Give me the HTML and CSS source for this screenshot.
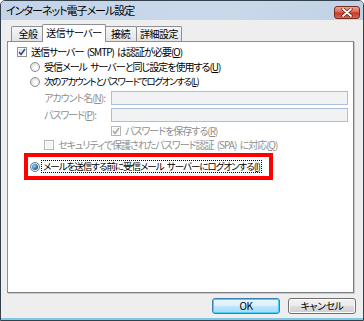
FILE: index.html
```html
<!DOCTYPE html>
<html lang="ja">
<head>
<meta charset="utf-8">
<link rel="stylesheet" href="styles.css">
</head>
<body>
<div class="window">
  <div class="titlebar">
    <span class="title">インターネット電子メール設定</span>
    <span class="close">
      <svg width="14" height="9" viewBox="0 0 14 9"><path d="M3 1 L11 8 M11 1 L3 8" stroke="#5a1a12" stroke-width="3.2" stroke-linecap="round"/><path d="M3 1 L11 8 M11 1 L3 8" stroke="#fff" stroke-width="1.8" stroke-linecap="round"/></svg>
    </span>
  </div>
  <div class="tabs">
    <span class="tab t1">全般</span>
    <span class="tab active">送信サーバー</span>
    <span class="tab t3">接続</span>
    <span class="tab t4">詳細設定</span>
  </div>
  <div class="panel">
    <div class="row r-smtp">
      <span class="cb"><svg width="8" height="8" viewBox="0 0 8 8"><path d="M1 4 L3 6.5 L7 1" fill="none" stroke="#2c4a8c" stroke-width="1.5"/></svg></span>
      <span class="lbl">送信サーバー (SMTP) は認証が必要(<u>O</u>)</span>
    </div>
    <div class="row r-radio">
      <span class="rb"></span>
      <span class="lbl">受信メール サーバーと同じ設定を使用する(<u>U</u>)</span>
    </div>
    <div class="row r-radio">
      <span class="rb"></span>
      <span class="lbl tight">次のアカウントとパスワードでログオンする(<u>L</u>)</span>
    </div>
    <div class="field">
      <span class="flbl dis">アカウント名(<u>N</u>):</span>
      <span class="input"></span>
    </div>
    <div class="field">
      <span class="flbl dis">パスワード(<u>P</u>):</span>
      <span class="input"></span>
    </div>
    <div class="row r-save">
      <span class="cb disabled"><svg width="8" height="8" viewBox="0 0 8 8"><path d="M1 4 L3 6.5 L7 1" fill="none" stroke="#a8a8a8" stroke-width="1.5"/></svg></span>
      <span class="lbl dis">パスワードを保存する(<u>R</u>)</span>
    </div>
    <div class="row r-spa">
      <span class="cb disabled"></span>
      <span class="lbl dis">セキュリティで保護されたパスワード認証 (SPA) に対応(<u>Q</u>)</span>
    </div>
    <div class="highlight">
      <div class="row r-sel">
        <span class="rb on"><span class="dot"></span></span>
        <span class="lbl focus">メールを送信する前に受信メール サーバーにログオンする(<u>I</u>)</span>
      </div>
    </div>
  </div>
  <div class="buttons">
    <span class="btn default">OK</span>
    <span class="btn">キャンセル</span>
  </div>
</div>
</body>
</html>
```
FILE: styles.css
```css
* { box-sizing: border-box; margin: 0; padding: 0; }
body {
  margin: 0;
  width: 364px;
  height: 321px;
  overflow: hidden;
  background: #fff;
  font-family: "Noto Sans CJK JP", "Noto Sans", sans-serif;
  font-size: 10px;
  line-height: 1;
  letter-spacing: -1px;
  word-spacing: 2px;
  color: #000;
  font-feature-settings: "palt";
}
u { text-decoration: underline; text-underline-offset: 1px; }
.window {
  width: 364px;
  height: 321px;
  border: 1px solid #34404c;
  border-radius: 5px 5px 0 0;
  background: #eeeeee;
  box-shadow: inset 0 -2px 0 #7cc8e6;
  display: flex;
  flex-direction: column;
  overflow: hidden;
}
.titlebar {
  height: 19px;
  flex: none;
  background: linear-gradient(to right, #c3d4e9, #cad9ea 60%, #c1d2e6);
  display: flex;
  align-items: center;
  justify-content: space-between;
  padding: 0 3px 0 5px;
}
.title { font-size: 11px; letter-spacing: -1px; }
.close {
  width: 26px;
  height: 13px;
  margin-top: 3px;
  border: 1px solid #7e2c20;
  border-radius: 3px;
  background: linear-gradient(#eba497, #d8614e 48%, #c33a24 52%, #d5664f);
  display: flex;
  align-items: center;
  justify-content: center;
}
.tabs {
  flex: none;
  display: flex;
  align-items: flex-end;
  height: 21px;
  padding-left: 10px;
  position: relative;
  z-index: 1;
}
.tab {
  height: 15px;
  border: 1px solid #8c9096;
  border-bottom: none;
  border-radius: 2px 2px 0 0;
  background: linear-gradient(#f6f6f6, #e3e3e3);
  display: flex;
  align-items: center;
  justify-content: center;
  margin-right: -1px;
  letter-spacing: -0.5px;
}
.t1 { width: 34px; }
.t3 { width: 33px; }
.t4 { width: 46px; }
.tab.active {
  width: 64px;
  height: 18px;
  margin: 0 -2px -1px -2px;
  background: #fff;
  position: relative;
  z-index: 2;
  padding-bottom: 2px;
}
.panel {
  flex: none;
  width: 347px;
  height: 252px;
  margin-left: 6px;
  background: #fff;
  border: 1px solid #8c9096;
  border-right-color: #7a7d82;
  border-bottom-color: #7a7d82;
  box-shadow: 1px 1px 0 #c9c9c9;
  padding-top: 2px;
  display: flex;
  flex-direction: column;
}
.row {
  display: flex;
  align-items: center;
  height: 15px;
}
.r-smtp { padding-left: 9px; }
.r-radio { padding-left: 22px; }
.r-save { padding-left: 103px; height: 14px; }
.r-spa { padding-left: 36px; height: 14px; }
.lbl { margin-left: 4px; white-space: nowrap; }
.lbl.tight { font-size: 9.5px; letter-spacing: -1.3px; }
.dis { color: #8f8f8f; }
.cb {
  width: 10px;
  height: 10px;
  border: 1px solid #8e8f8f;
  background: linear-gradient(135deg, #d9d9d9, #f9f9f9);
  box-shadow: inset 0 0 0 1px #fff;
  display: flex;
  align-items: center;
  justify-content: center;
}
.cb.disabled { border-color: #b5b5b5; background: #f4f4f4; }
.rb {
  width: 10px;
  height: 10px;
  border: 1px solid #8e8f8f;
  border-radius: 50%;
  background: radial-gradient(circle at 60% 60%, #fdfdfd 20%, #d3d3d3 90%);
  display: flex;
  align-items: center;
  justify-content: center;
}
.rb.on { border-color: #6c7c8c; }
.dot {
  width: 6px;
  height: 6px;
  border-radius: 50%;
  background: radial-gradient(circle at 35% 35%, #8fd0f5, #1b5c9e 70%, #153f73);
}
.field {
  display: flex;
  align-items: center;
  height: 14px;
  padding-left: 36px;
  margin-top: 2px;
}
.field + .field { margin-top: 3px; }
.flbl { width: 67px; white-space: nowrap; }
.input {
  width: 237px;
  height: 14px;
  border: 1px solid #abc0d8;
  background: #f1f2f3;
}
.field + .r-save { margin-top: 2px; }
.highlight {
  margin: 1px 0 0 16px;
  width: 249px;
  height: 27px;
  border: 4px solid #ff0000;
  display: flex;
  align-items: center;
  padding-left: 2px;
}
.r-sel .lbl {
  margin-left: 2px;
  padding: 1px 1px;
  outline: 1px dotted #000;
  font-size: 9.5px;
  letter-spacing: -1px;
}
.buttons {
  flex: none;
  display: flex;
  justify-content: flex-end;
  gap: 8px;
  padding: 5px 7px 0 0;
}
.btn {
  width: 68px;
  height: 16px;
  border: 1px solid #707070;
  border-radius: 3px;
  background: linear-gradient(#f2f2f2, #ebebeb 48%, #dddddd 52%, #cfcfcf);
  box-shadow: inset 0 0 0 1px #fcfcfc;
  display: flex;
  align-items: center;
  justify-content: center;
  font-size: 10px;
  letter-spacing: -0.5px;
}
.btn.default {
  border-color: #3c7fb1;
  box-shadow: inset 0 0 0 1px #48d0f8;
  background: linear-gradient(#eaf6fd, #d9f0fc 48%, #bee6fd 52%, #a7d9f5);
}
```
